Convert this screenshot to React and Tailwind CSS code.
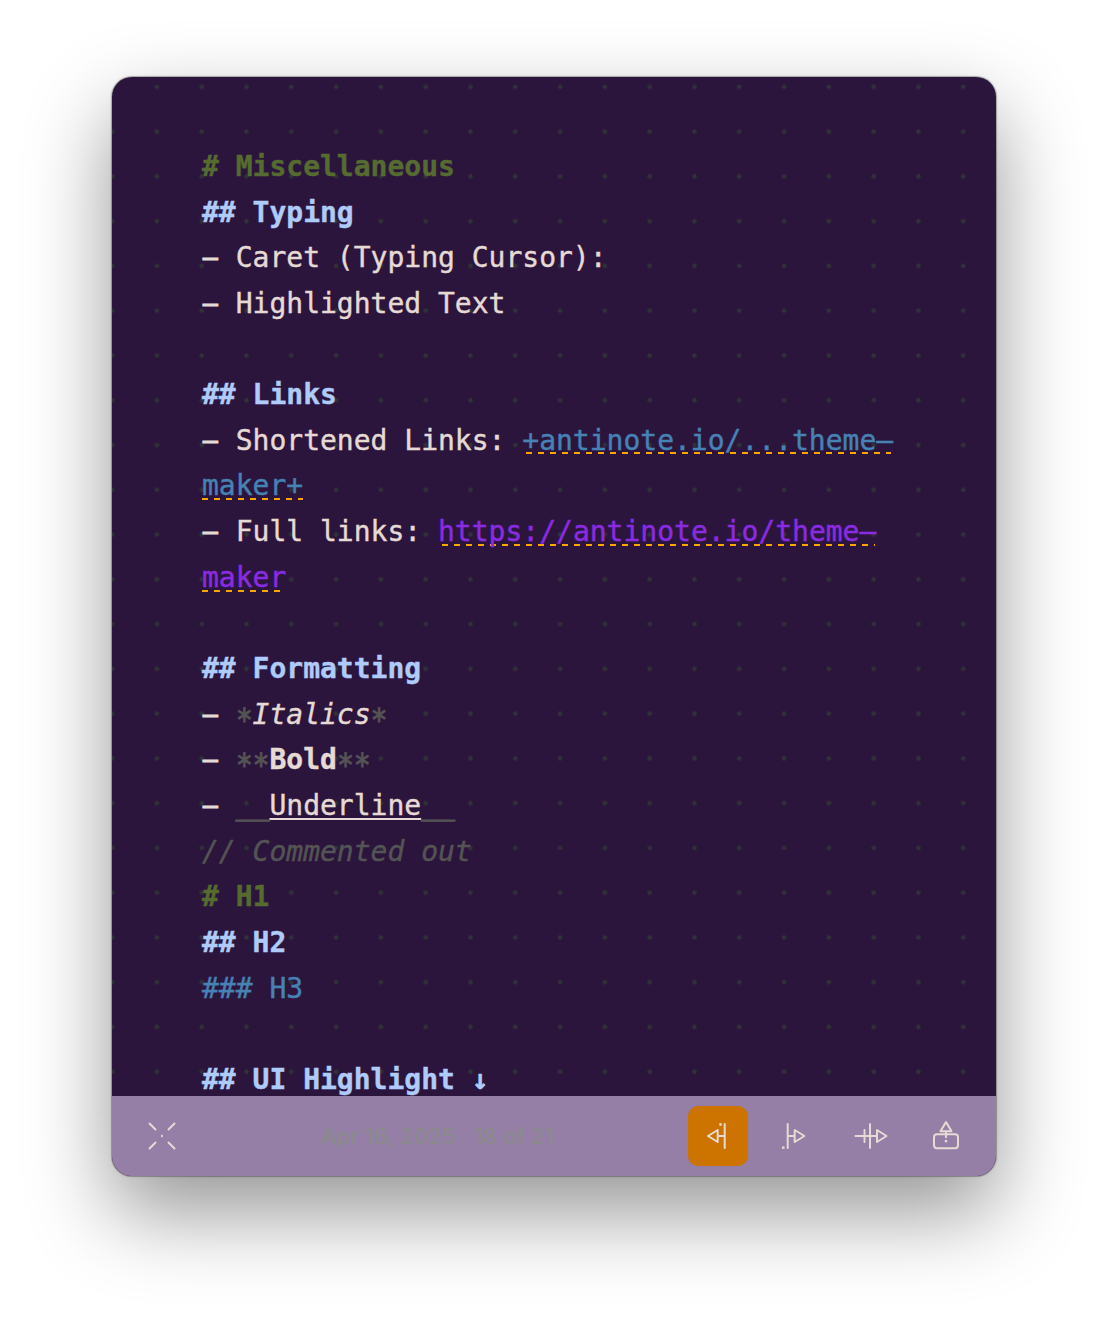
const cream = 'text-[#e6dad4]';
const h1 = 'font-bold text-[#556b2f]';
const h2 = 'font-bold text-[#aecbfa]';
const mark = 'text-[#545454]';

function Dash() {
  return <span><span className="inline-block -translate-y-[0.5px] scale-x-90 [-webkit-text-stroke:0.9px_currentColor]">–</span> </span>;
}

function Line({ className = '', children }) {
  return <div className={`h-[45.65px] whitespace-pre ${className}`}>{children}</div>;
}

function Dashed({ className, children }) {
  return (
    <span className={`bg-[repeating-linear-gradient(90deg,#ffa500_0_6px,transparent_6px_12px)] bg-no-repeat ${className}`}>
      {children}
    </span>
  );
}

function Stars({ children }) {
  return <span className={`inline-block h-[45.65px] scale-y-[1.15] align-top [-webkit-text-stroke:0.8px_currentColor] ${mark}`}>{children}</span>;
}

function Underscores() {
  return <span className={`inline-block h-[45.65px] -translate-y-[1.5px] align-top [-webkit-text-stroke:1px_currentColor] ${mark}`}>__</span>;
}

function Icon({ w, h, children }) {
  return (
    <svg width={w} height={h} viewBox={`0 0 ${w} ${h}`} fill="none" stroke="#e6dad4" strokeWidth="2" strokeLinecap="round" strokeLinejoin="round">
      {children}
    </svg>
  );
}

export default function App() {
  return (
    <div className="h-[1324px] w-[1108px] overflow-hidden bg-white px-[112px] pt-[77px]">
      <div className="flex h-[1099px] w-[884px] flex-col overflow-hidden rounded-[20px] bg-[#2c153d] shadow-[0_0_0_1px_rgba(0,0,0,0.2),0_0_3px_rgba(0,0,0,0.25),0_36px_84px_rgba(0,0,0,0.42)]">
        <div className="h-[1019px] overflow-hidden bg-[radial-gradient(circle_at_center,#2f3237_1.9px,transparent_2.5px)] bg-[length:44.8px_44.77px] bg-[position:22.5px_-12.5px] pl-[90px] pt-[67px]">
          <div className={`font-['DejaVu_Sans_Mono',monospace] text-[28px] leading-[45.65px] [-webkit-text-stroke:0.4px_currentColor] ${cream}`}>
            <Line className={h1}># Miscellaneous</Line>
            <Line className={h2}>## Typing</Line>
            <Line><Dash />Caret (Typing Cursor):</Line>
            <Line><Dash />Highlighted Text</Line>
            <Line />
            <Line className={h2}>## Links</Line>
            <Line>
              <Dash />Shortened Links: <Dashed className="bg-[length:365px_2px] bg-[position:4px_28px] text-[#4682b4]">+antinote.io/...theme–</Dashed>
            </Line>
            <Line>
              <Dashed className="bg-[length:101px_2px] bg-[position:0px_29px] text-[#4682b4]">maker+</Dashed>
            </Line>
            <Line>
              <Dash />Full links: <Dashed className="bg-[length:433px_2px] bg-[position:4px_29px] text-[#8a2be2]">https://antinote.io/theme–</Dashed>
            </Line>
            <Line>
              <Dashed className="bg-[length:85px_2px] bg-[position:0px_29px] text-[#8a2be2]">maker</Dashed>
            </Line>
            <Line />
            <Line className={h2}>## Formatting</Line>
            <Line><Dash /><Stars>∗</Stars><i>Italics</i><Stars>∗</Stars></Line>
            <Line><Dash /><Stars>∗∗</Stars><b>Bold</b><Stars>∗∗</Stars></Line>
            <Line><Dash /><Underscores /><span className="underline decoration-2 underline-offset-[3px]">Underline</span><Underscores /></Line>
            <Line className="italic text-[#545454]">// Commented out</Line>
            <Line className={h1}># H1</Line>
            <Line className={h2}>## H2</Line>
            <Line className="text-[#4682b4]">### H3</Line>
            <Line />
            <Line className={h2}>## UI Highlight ↓</Line>
          </div>
        </div>
        <div className="flex h-[80px] items-center bg-[#957fa6] pl-[34px] pr-[34px]">
          <Icon w={32} h={32}>
            <path d="M3.5 3.5l6 6M28.5 3.5l-6 6M3.5 28.5l6-6M28.5 28.5l-6-6" />
            <circle cx="16" cy="16" r="0.4" strokeWidth="1.6" />
          </Icon>
          <div className="ml-[143px] flex w-[367px] gap-[18px] whitespace-nowrap font-[Inter,sans-serif] text-[22px] font-medium text-[#8b8b8e]">
            <span className="tracking-[0.15px]">Apr 16, 2025</span>
            <span className="tracking-[0.15px]">18 of 21</span>
          </div>
          <div className="flex h-[60px] w-[60px] shrink-0 items-center justify-center rounded-[10px] bg-[#cc7300]">
            <Icon w={32} h={32}>
              <path d="M22.7 4v24M15.7 10v12l-9.7-6zM15.7 16h7" />
              <circle cx="18.5" cy="4.5" r="0.6" strokeWidth="1.6" />
            </Icon>
          </div>
          <div className="ml-[30px]">
            <Icon w={32} h={32}>
              <path d="M9.7 4v24M16.7 10v12l9.7-6zM16.7 16h-7" />
              <circle cx="5.3" cy="27.7" r="0.6" strokeWidth="1.6" />
            </Icon>
          </div>
          <div className="ml-[43px]">
            <Icon w={36} h={32}>
              <path d="M2.5 16h21.5M11.5 10v12M17 4v24M24 10v12l9.5-6z" />
            </Icon>
          </div>
          <div className="ml-[41px]">
            <Icon w={32} h={32}>
              <rect x="4" y="14.3" width="24" height="14" rx="3" />
              <path d="M16 2l5.5 9.3h-11zM16 11.3v6" />
              <circle cx="16" cy="21.2" r="0.6" strokeWidth="1.6" />
            </Icon>
          </div>
        </div>
      </div>
    </div>
  );
}
